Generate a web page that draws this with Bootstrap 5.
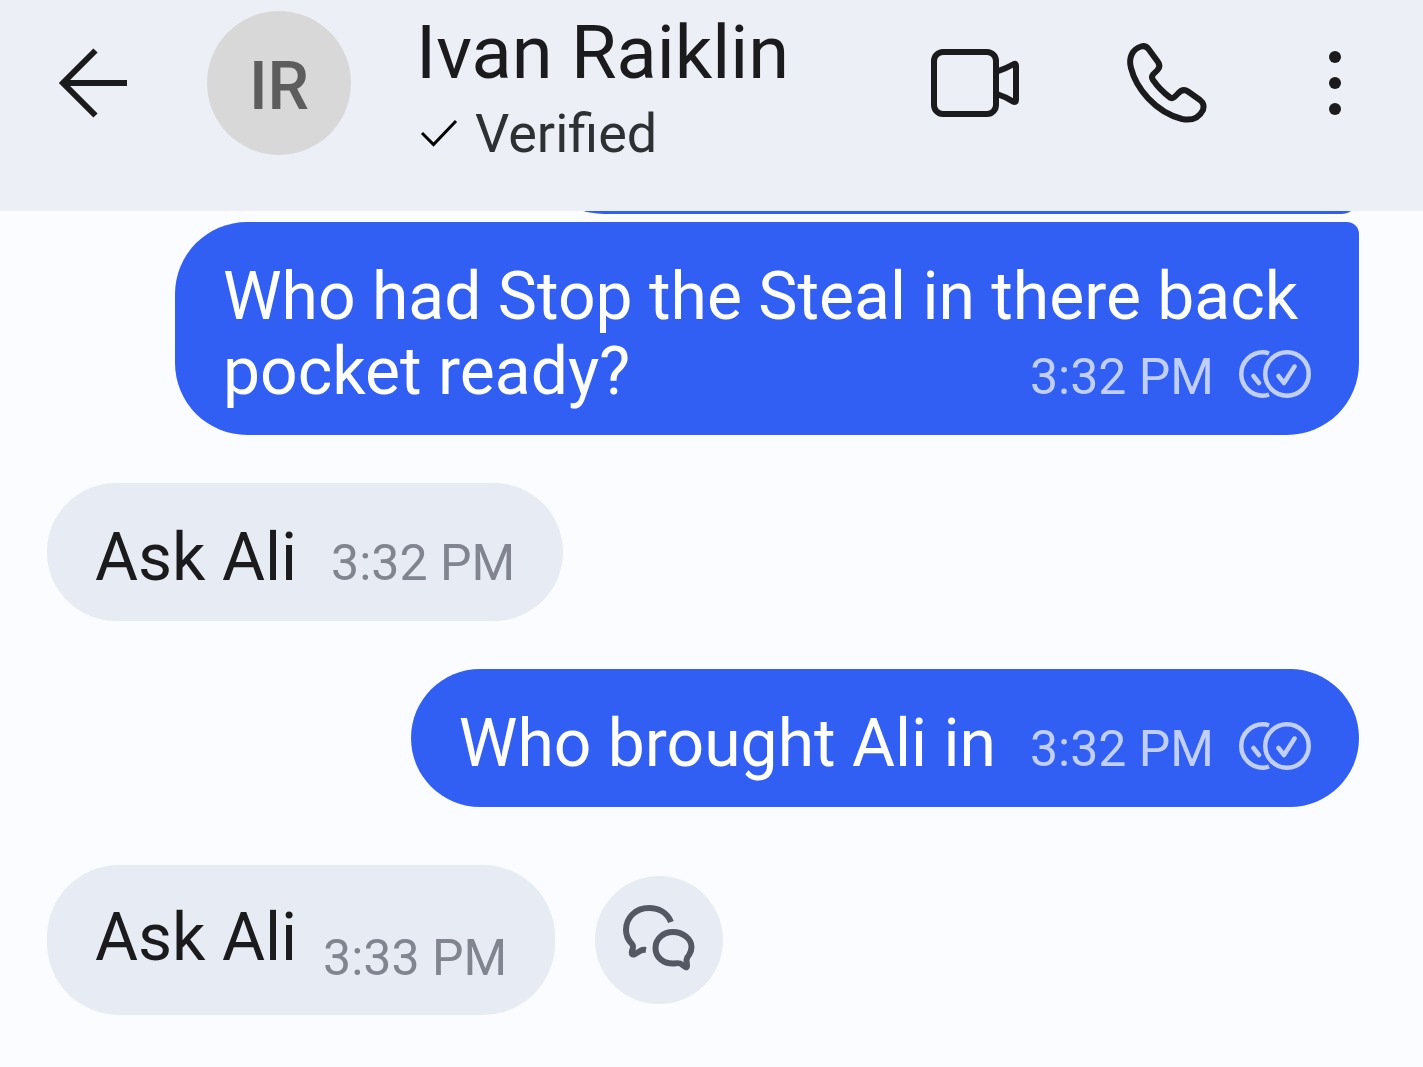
<!DOCTYPE html>
<html lang="en">
<head>
<meta charset="utf-8">
<meta name="viewport" content="width=device-width, initial-scale=1">
<title>Ivan Raiklin</title>
<link href="https://cdn.jsdelivr.net/npm/bootstrap@5.3.0/dist/css/bootstrap.min.css" rel="stylesheet">
<style>
  body { font-family: Roboto, "Liberation Sans", sans-serif; background: #fbfcff; color: #1b1b1d; }
  .chat-header { background: #edeff7; padding: 11px 63px 56px 48px; }
  .icon-btn { color: #1b1b1d; line-height: 0; }
  .back-btn { margin-right: 69px; }
  .avatar { width: 144px; height: 144px; background: #d8d8d8; color: #5d5d5d; font-size: 66px; font-weight: 500; margin-right: 65px; padding-top: 6px; }
  .contact-name { font-size: 74px; line-height: 84px; }
  .contact-state { font-size: 54px; line-height: 42px; color: #2e3133; gap: 17px; margin-top: 18px; }
  .header-actions { gap: 97px; }
  .thread { padding: 0 64px 52px 47px; }
  .bubble { font-size: 66px; line-height: 75px; padding: 37px 48px 26px; border-radius: 72px; }
  .sent { background: #315ff4; color: #fff; }
  .received { background: #e7ebf3; }
  .long-text { margin-left: 128px; }
  .group-end { border-top-right-radius: 12px; }
  .stamp { font-size: 50px; line-height: 56px; color: #82858f; }
  .sent .stamp { color: #c1cffc; }
  .stamp-gap { gap: 34px; }
  .sent-meta { gap: 25px; }
  .sent-meta svg { margin-bottom: 6px; }
  .earlier { height: 3px; }
  .earlier-bubble { width: 827px; height: 144px; border-radius: 72px 72px 18px 72px; }
  .last-row { margin-top: 58px; gap: 40px; }
  .last-one { padding-top: 35px; padding-bottom: 29px; gap: 26px; }
  .last-one .stamp { padding-top: 30px; }
  .react-btn { width: 128px; height: 128px; background: #e7ebf3; color: #545863; }
</style>
</head>
<body>
<header class="chat-header d-flex align-items-center">
  <button class="icon-btn btn p-0 border-0 back-btn" type="button" aria-label="Back">
    <svg width="90" height="80" viewBox="48 43 90 80" fill="none" stroke="currentColor" stroke-width="6"><path d="M95.500 50.500 63 83 95.500 115.500M63 83H127"/></svg>
  </button>
  <div class="avatar rounded-circle d-flex align-items-center justify-content-center">IR</div>
  <div class="me-auto">
    <h1 class="contact-name fw-normal mb-0">Ivan Raiklin</h1>
    <div class="contact-state d-flex align-items-center">
      <svg width="42" height="32" viewBox="416 117 42 32" fill="none" stroke="#000" stroke-width="3"><path d="M422 132 433.500 143.500 456 120"/></svg>
      <span>Verified</span>
    </div>
  </div>
  <div class="header-actions d-flex align-items-center">
    <button class="icon-btn btn p-0 border-0" type="button" aria-label="Video call">
      <svg width="100" height="80" viewBox="926 43 100 80" fill="none" stroke="currentColor" stroke-width="6" stroke-linejoin="round"><rect x="934" y="52" width="62" height="62" rx="9"/><path d="M997 71.500Q1007 68 1014 64Q1016 63 1016 66V100Q1016 103 1013 101.500Q1006 97 997 94"/></svg>
    </button>
    <button class="icon-btn btn p-0 border-0" type="button" aria-label="Voice call">
      <svg width="90" height="90" viewBox="1123 38 90 90" fill="none" stroke="currentColor" stroke-width="6" stroke-linejoin="round"><path d="M1148.500 49 1158 62Q1161 66 1157.500 70L1153 74.500Q1151 77 1153 80Q1160 90 1170 97.500Q1173 99 1175 96.500L1178 93.500Q1183 88 1188 91.500L1200 100Q1205 104 1203 110Q1197 122 1182 119C1155 112 1136 88 1131 68C1128 57 1133 49 1141 46.500Q1145.500 45 1148.500 49Z"/></svg>
    </button>
    <button class="icon-btn btn p-0 border-0" type="button" aria-label="More options">
      <svg width="50" height="80" viewBox="1310 43 50 80" fill="currentColor"><circle cx="1335" cy="57" r="6"/><circle cx="1335" cy="83" r="6"/><circle cx="1335" cy="109" r="6"/></svg>
    </button>
  </div>
</header>

<svg class="d-none" aria-hidden="true">
  <symbol id="read-mark" viewBox="0 0 72 48">
    <g fill="none" stroke="#c1cffc" stroke-width="4.500">
      <path d="M30 3.500Q27 2.250 24 2.250A21.750 21.750 0 0 0 24 45.750Q27 45.750 30 44.500"/>
      <circle cx="48" cy="24" r="21.750"/>
      <path d="M14.500 26 20 33M39.500 26 45 33 55.500 16.500" stroke-linecap="round" stroke-linejoin="round"/>
    </g>
  </symbol>
</svg>

<main class="thread d-flex flex-column">
  <div class="earlier overflow-hidden d-flex align-items-end justify-content-end"><div class="earlier-bubble sent flex-shrink-0"></div></div>

  <div class="bubble sent group-end long-text mt-2">
    <div>Who had Stop the Steal in there back</div>
    <div class="d-flex align-items-baseline justify-content-between">
      <span>pocket ready?</span>
      <span class="sent-meta d-flex align-items-center"><span class="stamp">3:32 PM</span><svg width="72" height="48" role="img" aria-label="Read"><use href="#read-mark"/></svg></span>
    </div>
  </div>

  <div class="bubble received stamp-gap align-self-start d-flex align-items-baseline mt-5">
    <span>Ask Ali</span><span class="stamp">3:32 PM</span>
  </div>

  <div class="bubble sent stamp-gap align-self-end d-flex align-items-baseline mt-5">
    <span>Who brought Ali in</span>
    <span class="sent-meta d-flex align-items-center"><span class="stamp">3:32 PM</span><svg width="72" height="48" role="img" aria-label="Read"><use href="#read-mark"/></svg></span>
  </div>

  <div class="last-row d-flex align-items-center">
    <div class="bubble received last-one d-flex align-items-start">
      <span>Ask Ali</span><span class="stamp">3:33 PM</span>
    </div>
    <button class="react-btn btn rounded-circle border-0 p-0" type="button" aria-label="Reply in thread">
      <svg width="80" height="80" viewBox="619 900 80 80" fill="none" stroke="currentColor" stroke-width="6" stroke-linejoin="round"><path d="M671 922C667 912 658 908 649 908C635 908 626 918 626 930C626 937 629 941 632 944Q634 946 632 951Q631 956 635 954L641 950.500Q643 949.500 646 950"/><path d="M673 932C663 932 655.500 939 655.500 948C655.500 958 664 964 674 963.500Q680 962.500 682 964.500L685.500 967Q687 968 687 966L686.500 960Q687 957 689 955Q691.500 951 691.500 947C691.500 939 683 932 673 932Z"/></svg>
    </button>
  </div>
</main>
<script src="https://cdn.jsdelivr.net/npm/bootstrap@5.3.0/dist/js/bootstrap.bundle.min.js"></script>
</body>
</html>
